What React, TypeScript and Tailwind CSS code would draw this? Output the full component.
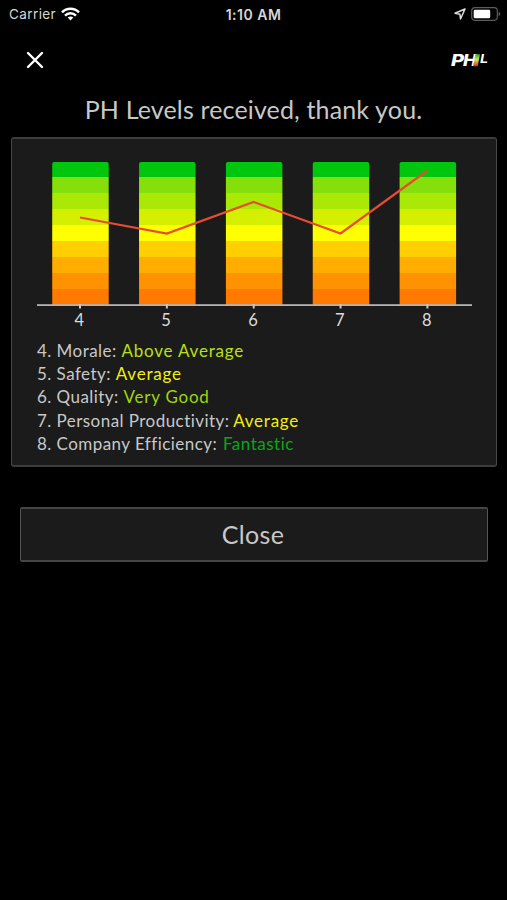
import { clsx } from 'clsx';

type Level = {
    id: number;
    label: string;
    rating: string;
    color: string;
    y: number;
};

const levels: Level[] = [
    { id: 4, label: 'Morale', rating: 'Above Average', color: 'text-[#b9e010] tracking-[0.8px]', y: 65.5 },
    { id: 5, label: 'Safety', rating: 'Average', color: 'text-[#f4f00c] tracking-[0.8px]', y: 81.5 },
    { id: 6, label: 'Quality', rating: 'Very Good', color: 'text-[#9fd60e] tracking-[0.75px]', y: 50 },
    { id: 7, label: 'Personal Productivity', rating: 'Average', color: 'text-[#f4f00c] tracking-[0.75px] -ml-px', y: 81.5 },
    { id: 8, label: 'Company Efficiency', rating: 'Fantastic', color: 'text-[#0ca51a] tracking-[0.5px] ml-px', y: 18.5 },
];

// top to bottom, best rating first
const bands = ['#00c60d', '#84df0b', '#aae805', '#d4f000', '#ffff00', '#ffcf00', '#ffae00', '#ff9200', '#ff7a00'];

const BAR_WIDTH = 56.5;
const BAR_STEP = 86.85;

function StatusBar() {
    return (
        <div className="grid h-7 grid-cols-3 items-center pl-[9px] pr-[6px] font-['Inter',sans-serif] text-[13.5px] text-[#d6d6d6]">
            <div className="flex items-center gap-[5px]">
                <span className="tracking-[0.4px]">Carrier</span>
                <svg width="19" height="14" viewBox="0 0 19 14" fill="none" stroke="#fff" strokeWidth="2.5">
                    <path d="M1 5.3C5.7.5 13.3.5 18 5.3" />
                    <path d="M4 8.6c3.1-3.1 7.9-3.1 11 0" />
                    <path d="M6.7 10.6c1.6-1.5 4-1.5 5.6 0L9.5 13.6z" fill="#fff" stroke="none" />
                </svg>
            </div>
            <span className="pr-[3px] text-center text-[14px] font-semibold tracking-[0.5px]">1:10 AM</span>
            <div className="flex items-center justify-end gap-[5px]">
                <svg width="12" height="12" viewBox="0 0 12 12" fill="none" stroke="#ddd" strokeWidth="1.5" strokeLinejoin="round">
                    <path d="M11 1 1 5.2l4.9 1 .6 4.8z" />
                </svg>
                <svg width="30" height="14" viewBox="0 0 30 14">
                    <rect x=".7" y=".7" width="25.6" height="12.6" rx="3.2" fill="none" stroke="#5c5c5c" strokeWidth="1.2" />
                    <rect x="2.7" y="2.7" width="16.5" height="8.6" rx="1.3" fill="#fff" />
                    <path d="M27.6 4.8c2.2.7 2.2 3.7 0 4.4z" fill="#5c5c5c" />
                </svg>
            </div>
        </div>
    );
}

function Logo() {
    return (
        <svg width="40" height="24" viewBox="0 0 40 24" aria-label="PHL" fontFamily="Inter" fontStyle="italic" fill="#fff">
            <defs>
                <linearGradient id="bar" x1="0" y1="0" x2="0" y2="1">
                    <stop offset="0" stopColor="#19b52c" />
                    <stop offset=".45" stopColor="#e3e04b" />
                    <stop offset="1" stopColor="#e8251c" />
                </linearGradient>
            </defs>
            <text x="1" y="18.3" fontSize="16.3" fontWeight="800" textLength="13" lengthAdjust="spacingAndGlyphs">P</text>
            <text x="13" y="18.3" fontSize="16.3" fontWeight="800" textLength="13.6" lengthAdjust="spacingAndGlyphs">H</text>
            <path d="M25.4 6.3h4.6l-2.3 12h-4.6z" fill="url(#bar)" />
            <text x="30" y="15" fontSize="11.8" fontWeight="700" textLength="8" lengthAdjust="spacingAndGlyphs">L</text>
        </svg>
    );
}

function LevelsChart() {
    const points = levels.map((l, i) => `${43 + i * BAR_STEP},${l.y - 10}`).join(' ');

    return (
        <svg width="435" height="168" viewBox="0 0 435 168">
            <defs>
                <clipPath id="rounded">
                    {levels.map((l, i) => (
                        <rect key={l.id} x={15.2 + i * BAR_STEP} y="0" width={BAR_WIDTH} height="150" rx="2" />
                    ))}
                </clipPath>
            </defs>
            <g clipPath="url(#rounded)">
                {bands.map((fill, i) => (
                    <rect key={fill} x="0" y={i === 0 ? 0 : i * 16 - 1} width="435" height={i === 0 ? 15 : 16} fill={fill} shapeRendering="crispEdges" />
                ))}
            </g>
            <rect x="0" y="142.2" width="435" height="1.8" fill="#b4b4b4" />
            {levels.map((l, i) => (
                <g key={l.id}>
                    <rect x={42 + i * BAR_STEP} y="142" width="2" height="4.5" fill="#c8c8c8" />
                    <text x={42.3 + i * BAR_STEP} y="164" textAnchor="middle" fontFamily="Lato" fontSize="16.5" fill="#dcdcdc">{l.id}</text>
                </g>
            ))}
            <polyline points={points} fill="none" stroke="#e74c32" strokeWidth="2.2" />
        </svg>
    );
}

export default function App() {
    return (
        <div className="flex h-[900px] w-full flex-col bg-black font-['Lato',sans-serif] text-[#c8c8c8]">
            <StatusBar />
            <header className="flex h-16 items-center justify-between pl-[26px] pr-[17px]">
                <button aria-label="Dismiss">
                    <svg width="18" height="18" viewBox="0 0 18 18" stroke="#fff" strokeWidth="2.4" strokeLinecap="round">
                        <path d="M2 2l14 14M16 2 2 16" />
                    </svg>
                </button>
                <Logo />
            </header>
            <h1 className="h-[45px] whitespace-nowrap text-center text-[25px] leading-[34px] tracking-[0.15px]">PH Levels received, thank you.</h1>
            <section className="ml-[11px] mr-[10px] h-[330px] rounded-[3px] border-x border-y-2 border-x-[#484848] border-y-[#3c3c3c] bg-[#1b1b1b] pl-[25px] pt-[23px]">
                <LevelsChart />
                <ul className="mt-[9px] text-[17px] leading-[23.2px] tracking-[0.45px]">
                    {levels.map((l) => (
                        <li key={l.id} className="whitespace-nowrap">
                            {l.id}. {l.label}: <span className={clsx(l.color)}>{l.rating}</span>
                        </li>
                    ))}
                </ul>
            </section>
            <button className="ml-[20px] mr-[19px] mt-[40px] h-[55px] rounded-[2px] border-x border-y-2 border-x-[#555] border-y-[#464646] bg-[#1b1b1b] pr-[2px] text-[25px] tracking-[0.3px]">
                Close
            </button>
        </div>
    );
}
